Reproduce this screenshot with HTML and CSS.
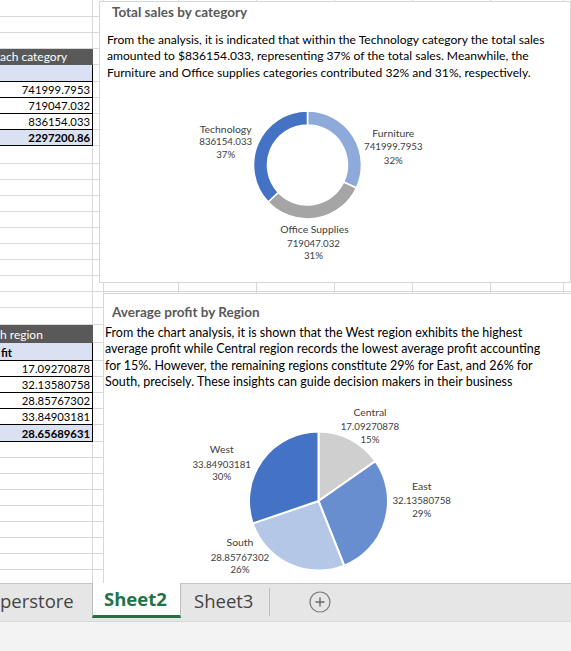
FILE: index.html
```html
<!DOCTYPE html>
<html>
<head>
<meta charset="utf-8">
<link rel="stylesheet" href="styles.css">
</head>
<body>
<div class="screen">
  <div class="sheet">
    <div class="grid">
      <div class="row r17"><div class="ca"></div><div class="cb"></div></div>
      <div class="row"><div class="ca"></div><div class="cb"></div></div>
      <div class="row"><div class="ca"></div><div class="cb"></div></div>
      <div class="row"><div class="ca head">ach category</div><div class="cb"></div></div>
      <div class="row r17"><div class="ca band"></div><div class="cb"></div></div>
      <div class="row"><div class="ca data num">741999.7953</div><div class="cb"></div></div>
      <div class="row"><div class="ca data num">719047.032</div><div class="cb"></div></div>
      <div class="row"><div class="ca data num">836154.033</div><div class="cb"></div></div>
      <div class="row"><div class="ca band num total">2297200.86</div><div class="cb"></div></div>
      <div class="row r18"><div class="ca"></div><div class="cb"></div></div>
      <div class="row"><div class="ca"></div><div class="cb"></div></div>
      <div class="row"><div class="ca"></div><div class="cb"></div></div>
      <div class="row"><div class="ca"></div><div class="cb"></div></div>
      <div class="row"><div class="ca"></div><div class="cb"></div></div>
      <div class="row"><div class="ca"></div><div class="cb"></div></div>
      <div class="row"><div class="ca"></div><div class="cb"></div></div>
      <div class="row"><div class="ca"></div><div class="cb"></div></div>
      <div class="row"><div class="ca"></div><div class="cb"></div></div>
      <div class="row"><div class="ca"></div><div class="cb"></div></div>
      <div class="row r17"><div class="ca"></div><div class="cb"></div></div>
      <div class="row r18"><div class="ca head">h region</div><div class="cb"></div></div>
      <div class="row r18"><div class="ca band total">fit</div><div class="cb"></div></div>
      <div class="row"><div class="ca data num">17.09270878</div><div class="cb"></div></div>
      <div class="row"><div class="ca data num">32.13580758</div><div class="cb"></div></div>
      <div class="row"><div class="ca data num">28.85767302</div><div class="cb"></div></div>
      <div class="row"><div class="ca data num">33.84903181</div><div class="cb"></div></div>
      <div class="row r17"><div class="ca band num total">28.65689631</div><div class="cb"></div></div>
      <div class="row"><div class="ca"></div><div class="cb"></div></div>
      <div class="row"><div class="ca"></div><div class="cb"></div></div>
      <div class="row"><div class="ca"></div><div class="cb"></div></div>
      <div class="row"><div class="ca"></div><div class="cb"></div></div>
      <div class="row"><div class="ca"></div><div class="cb"></div></div>
      <div class="row"><div class="ca"></div><div class="cb"></div></div>
      <div class="row"><div class="ca"></div><div class="cb"></div></div>
      <div class="row"><div class="ca"></div><div class="cb"></div></div>
      <div class="row"><div class="ca"></div><div class="cb"></div></div>
    </div>

    <section class="chart chart-sales">
      <h2 class="chart-title">Total sales by category</h2>
      <p class="chart-desc">From the analysis, it is indicated that within the Technology category the total sales<br>amounted to $836154.033, representing 37% of the total sales. Meanwhile, the<br>Furniture and Office supplies categories contributed 32% and 31%, respectively.</p>
      <svg class="plot" width="470" height="200" viewBox="0 0 470 200">
        <g stroke="#fff" stroke-width="1.6">
          <path fill="#8eaadb" d="M207.5,30 A54,54 0 0 1 256.36,106.99 L243.69,101.03 A40,40 0 0 0 207.5,44 Z"/>
          <path fill="#a5a5a5" d="M256.36,106.99 A54,54 0 0 1 168.13,120.96 L178.34,111.38 A40,40 0 0 0 243.69,101.03 Z"/>
          <path fill="#4472c4" d="M168.13,120.96 A54,54 0 0 1 207.5,30 L207.5,44 A40,40 0 0 0 178.34,111.38 Z"/>
        </g>
        <g class="lbl" text-anchor="middle">
          <text class="name" x="125.7" y="51.5">Technology</text>
          <text x="125.7" y="64.3">836154.033</text>
          <text x="125.7" y="77">37%</text>
          <text class="name" x="293.3" y="55.8">Furniture</text>
          <text x="293.3" y="69.3">741999.7953</text>
          <text x="293.3" y="82.5">32%</text>
          <text class="name" x="214.5" y="151.8">Office Supplies</text>
          <text x="213.5" y="165.5">719047.032</text>
          <text x="213.5" y="178">31%</text>
        </g>
      </svg>
    </section>

    <section class="chart chart-profit">
      <h2 class="chart-title">Average profit by Region</h2>
      <p class="chart-desc">From the chart analysis, it is shown that the West region exhibits the highest<br>average profit while Central region records the lowest average profit accounting<br>for 15%. However, the remaining regions constitute 29% for East, and 26% for<br>South, precisely. These insights can guide decision makers in their business</p>
      <svg class="plot" width="470" height="200" viewBox="0 0 470 200">
        <g stroke="#fff" stroke-width="2" stroke-linejoin="round">
          <path fill="#cfcfcf" d="M214.5,111 L214.5,41.5 A69.5,69.5 0 0 1 271.42,71.12 Z"/>
          <path fill="#698ed0" d="M214.5,111 L271.42,71.12 A69.5,69.5 0 0 1 240.17,175.59 Z"/>
          <path fill="#b4c7e7" d="M214.5,111 L240.17,175.59 A69.5,69.5 0 0 1 148.73,133.48 Z"/>
          <path fill="#4472c4" d="M214.5,111 L148.73,133.48 A69.5,69.5 0 0 1 214.5,41.5 Z"/>
        </g>
        <g class="lbl" text-anchor="middle">
          <text class="name" x="266" y="25.6">Central</text>
          <text x="266" y="39.8">17.09270878</text>
          <text x="266" y="52.6">15%</text>
          <text class="name" x="317.7" y="100">East</text>
          <text x="317.7" y="114">32.13580758</text>
          <text x="317.7" y="126.6">29%</text>
          <text class="name" x="117.7" y="63.3">West</text>
          <text x="117.7" y="77.6">33.84903181</text>
          <text x="117.7" y="90">30%</text>
          <text class="name" x="136" y="156">South</text>
          <text x="136" y="170.6">28.85767302</text>
          <text x="136" y="183.3">26%</text>
        </g>
      </svg>
    </section>
  </div>

  <div class="tabbar">
    <div class="tab tab-prev">perstore</div>
    <div class="tab tab-active">Sheet2</div>
    <div class="tab tab-next">Sheet3</div>
    <div class="tab-sep"></div>
    <svg class="add" width="22" height="22" viewBox="0 0 22 22">
      <circle cx="11" cy="11" r="10" fill="none" stroke="#7a7a7a" stroke-width="1.2"/>
      <path d="M11 6.5V15.5M6.5 11H15.5" stroke="#6a6a6a" stroke-width="1.4"/>
    </svg>
  </div>
  <div class="statusbar"></div>
</div>
</body>
</html>
```

FILE: styles.css
```css
* { box-sizing: border-box; }
html, body { margin: 0; padding: 0; background: #fff; }
body { width: 571px; height: 651px; overflow: hidden; font-family: Lato, "Open Sans", sans-serif; }

.screen { display: flex; flex-direction: column; width: 571px; height: 651px; }

.sheet { position: relative; height: 583px; overflow: hidden; flex: none; }

.grid {
  display: flex;
  flex-direction: column;
  background:
    linear-gradient(#d8d8d8, #d8d8d8) 178px 0 / 1px 100% no-repeat,
    linear-gradient(#d8d8d8, #d8d8d8) 256px 0 / 1px 100% no-repeat,
    linear-gradient(#d8d8d8, #d8d8d8) 334px 0 / 1px 100% no-repeat,
    linear-gradient(#d8d8d8, #d8d8d8) 412px 0 / 1px 100% no-repeat,
    linear-gradient(#d8d8d8, #d8d8d8) 490px 0 / 1px 100% no-repeat,
    linear-gradient(#d8d8d8, #d8d8d8) 563px 0 / 1px 100% no-repeat;
}

.row { display: flex; height: 16px; border-bottom: 1px solid #d8d8d8; flex: none; }
.row.r17 { height: 17px; }
.row.r18 { height: 18px; }

.ca {
  width: 93px;
  height: calc(100% + 1px);
  margin-bottom: -1px;
  border-right: 1px solid #d8d8d8;
  border-bottom: 1px solid transparent;
  display: flex;
  align-items: flex-end;
  padding: 0 2px 1px 1px;
  font-size: 11.3px;
  line-height: 13px;
  color: #000;
  white-space: nowrap;
  overflow: hidden;
}
.cb { width: 11px; border-right: 1px solid #d8d8d8; }

.ca.head { background: #595959; color: #fff; border-right-color: #595959; border-bottom-color: #595959; font-size: 12px; padding-left: 0; }
.ca.band { background: #d9e1f2; border-right-color: #000; border-bottom-color: #000; }
.ca.data { border-right-color: #000; border-bottom-color: #000; }
.ca.num { justify-content: flex-end; }
.ca.total { font-weight: 700; }

.chart { position: absolute; background: #fff; border: 1px solid #d6d6d6; overflow: hidden; }
.chart-sales { left: 99px; top: 1px; width: 472px; height: 282px; }
.chart-profit { left: 103px; top: 293px; width: 480px; height: 300px; }

.chart-title {
  margin: 0;
  height: 20px;
  line-height: 20px;
  font-size: 13.5px;
  font-weight: 700;
  color: #595959;
  white-space: nowrap;
}
.chart-desc {
  margin: 0;
  font-size: 12.1px;
  line-height: 16.3px;
  color: #000;
  white-space: nowrap;
}
.chart-sales .chart-title { padding-left: 12px; }
.chart-sales .chart-desc { margin-top: 10px; padding-left: 7px; height: 49px; }
.chart-profit .chart-title { margin-top: 8px; padding-left: 8px; }
.chart-profit .chart-desc { margin-top: 3px; padding-left: 1px; height: 65px; overflow: hidden; line-height: 16.25px; font-size: 12.5px; }

.plot { display: block; }
.lbl { font-family: Lato, "Open Sans", sans-serif; font-size: 9.7px; fill: #404040; }
.lbl .name { font-size: 10.4px; }

.tabbar {
  flex: none;
  height: 38px;
  display: flex;
  align-items: flex-start;
  background: #e6e6e6;
  border-top: 1px solid #c6c6c6;
  font-family: "Open Sans", "Noto Sans", sans-serif;
  font-size: 18.5px;
  color: #444;
}
.tab { height: 37px; display: flex; align-items: center; padding-bottom: 4px; white-space: nowrap; }
.tab-prev { width: 92px; padding-left: 0; overflow: hidden; }
.tab-active {
  width: 89px;
  height: 35px;
  margin-top: -1px;
  padding-left: 11px;
  padding-bottom: 2px;
  background: #fff;
  border-left: 1px solid #bdbdbd;
  border-right: 1px solid #bdbdbd;
  border-bottom: 3px solid #217346;
  color: #217346;
  font-weight: 700;
}
.tab-next { padding-left: 13px; width: 88px; }
.tab-sep { width: 1px; height: 28px; margin-top: 4px; background: #bdbdbd; }
.add { margin-left: 39px; margin-top: 7px; flex: none; }

.statusbar { flex: 1; background: #f3f3f3; border-top: 1px solid #d9d9d9; }
```
